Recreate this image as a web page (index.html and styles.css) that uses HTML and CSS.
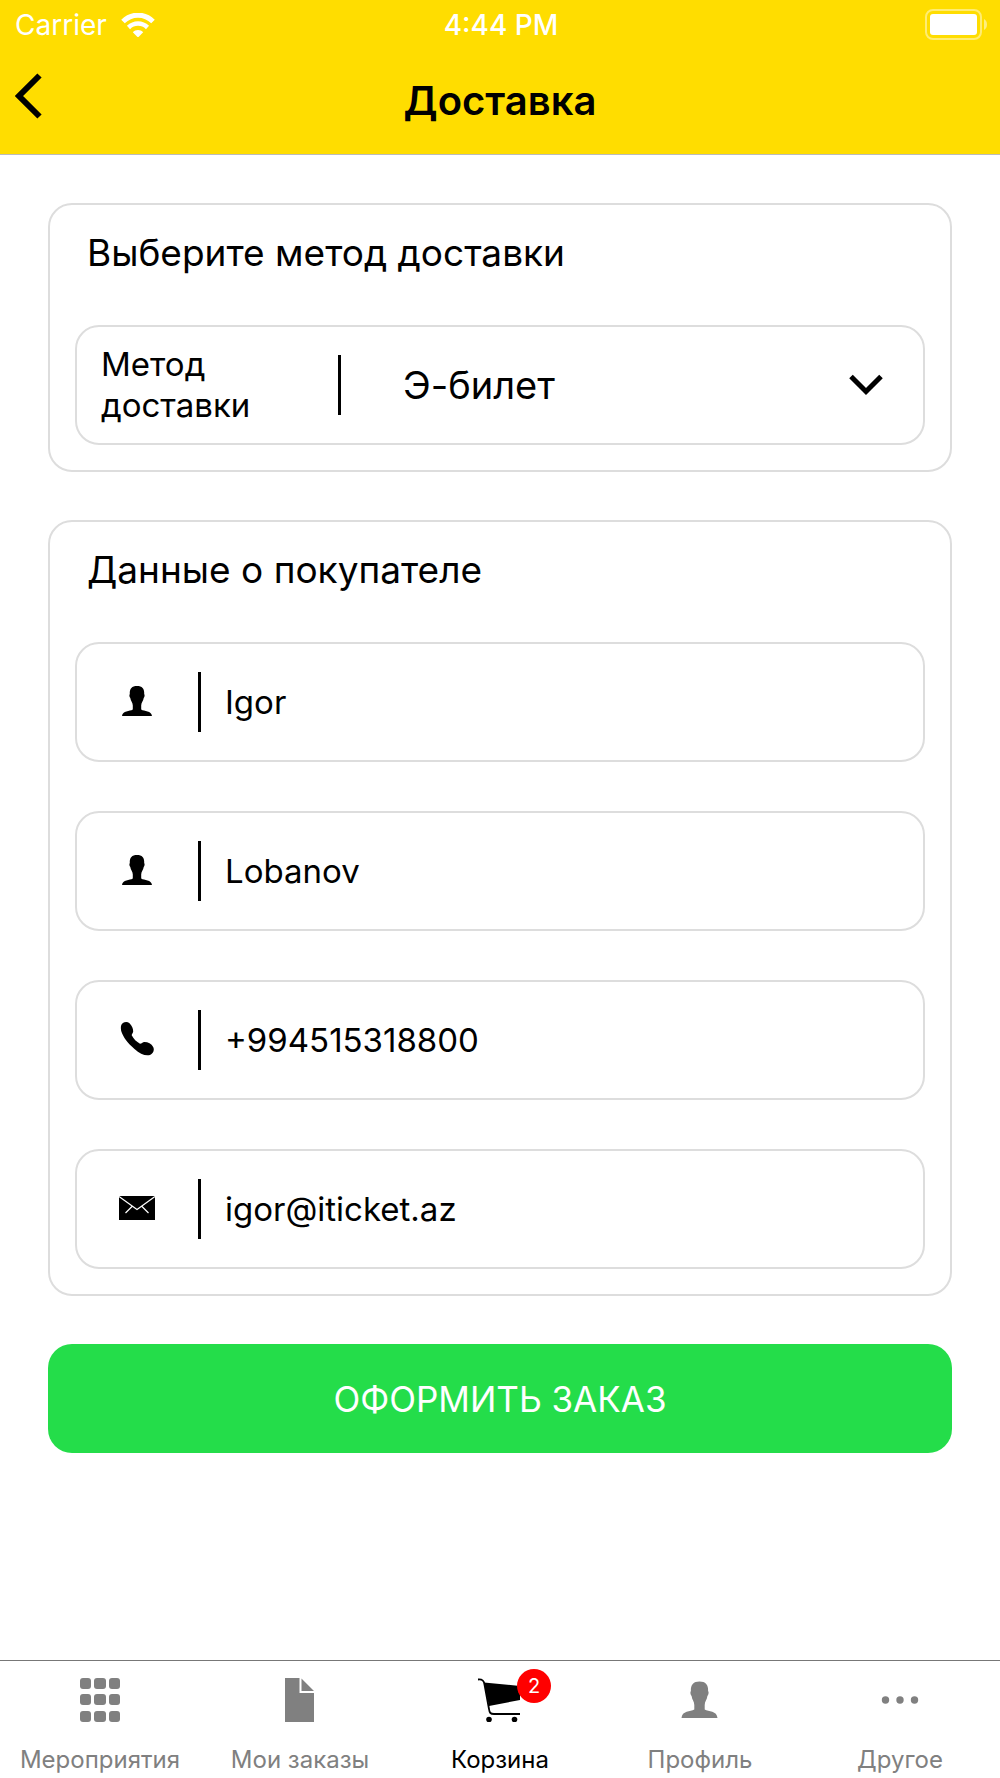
FILE: index.html
```html
<!DOCTYPE html>
<html lang="ru">

<head>
    <meta charset="UTF-8">
    <meta name="viewport" content="width=device-width, initial-scale=1.0">
    <title>Доставка</title>
    <link rel="stylesheet" href="styles.css">
</head>

<body>
    <header class="header">
        <div class="status-bar">
            <div class="carrier">
                <span>Carrier</span>
                <svg class="wifi" viewBox="0 0 34 24" fill="none" stroke="#fff">
                    <path d="M2 8.5C10.500 0 23.500 0 32 8.500" stroke-width="5" />
                    <path d="M7.500 14.500C13 9.300 21 9.300 26.500 14.500" stroke-width="4.500" />
                    <path d="M17 24.500L11.800 19.300C14.500 16.300 19.500 16.300 22.200 19.300Z" fill="#fff" stroke="none" />
                </svg>
            </div>
            <span class="time">4:44 PM</span>
            <svg class="battery" viewBox="0 0 62 32">
                <rect x="1" y="1" width="55" height="29" rx="7" fill="none" stroke="#fff" stroke-width="2" opacity="0.45" />
                <rect x="5" y="5" width="47" height="21" rx="3" fill="#fff" />
                <path d="M59 10c4 2 4 9 0 11z" fill="#fff" opacity="0.5" />
            </svg>
        </div>
        <div class="nav-bar">
            <button class="back-button" type="button" aria-label="Назад">
                <svg viewBox="0 0 28 46" fill="none" stroke="#000" stroke-width="6">
                    <path d="M24.500 2.500L4 23L24.500 43.500" />
                </svg>
            </button>
            <h1>Доставка</h1>
        </div>
    </header>

    <main class="container">
        <form class="order-form">
            <section class="card">
                <h2>Выберите метод доставки</h2>
                <div class="field method-field">
                    <label for="method">Метод доставки</label>
                    <span class="divider"></span>
                    <select id="method">
                        <option selected>Э-билет</option>
                    </select>
                    <svg class="chevron" viewBox="0 0 34 22" fill="none" stroke="#000" stroke-width="5">
                        <path d="M2 2.500L17 17.500L32 2.500" />
                    </svg>
                </div>
            </section>

            <section class="card">
                <h2>Данные о покупателе</h2>
                <div class="fields">
                    <label class="field">
                        <svg class="field-icon" viewBox="0 0 36 36">
                            <path d="M18 3c5 0 7.500 2.600 7.200 8 .7 1 .5 2.800-.5 4-.3 3-2.500 4.500-2.500 7.500v4c3 2 10.300 1 10.800 6.500H3C3.500 27.500 10.800 28.500 13.800 26.500v-4c0-3-2.200-4.500-2.500-7.500-1-1.200-1.200-3-.5-4C10.500 5.600 13 3 18 3z" />
                        </svg>
                        <span class="divider"></span>
                        <input type="text" value="Igor" aria-label="Имя">
                    </label>
                    <label class="field">
                        <svg class="field-icon" viewBox="0 0 36 36">
                            <path d="M18 3c5 0 7.500 2.600 7.200 8 .7 1 .5 2.800-.5 4-.3 3-2.500 4.500-2.500 7.500v4c3 2 10.300 1 10.800 6.500H3C3.500 27.500 10.800 28.500 13.800 26.500v-4c0-3-2.200-4.500-2.500-7.500-1-1.200-1.200-3-.5-4C10.500 5.600 13 3 18 3z" />
                        </svg>
                        <span class="divider"></span>
                        <input type="text" value="Lobanov" aria-label="Фамилия">
                    </label>
                    <label class="field">
                        <svg class="field-icon" viewBox="0 0 36 36">
                            <path d="M2 5C2.800 1.500 7.500-.2 10.500 2.300 13 4.800 14.200 7.500 14.200 10.500c-.2 1.700-1.400 2.300-1.500 3.800C14.500 18 17.500 20.800 21 22.800c1.800 0 2.300-1.500 4.500-1.700 3.500 0 7 2 8.700 4.800 1.600 3.500-.2 6.600-3.200 8-4.500 1.400-10-1.200-15.500-6C9 22.500 4 16 2.200 10 1.800 8 1.800 6.500 2 5z" />
                        </svg>
                        <span class="divider"></span>
                        <input type="tel" value="+994515318800" aria-label="Телефон">
                    </label>
                    <label class="field">
                        <svg class="field-icon" viewBox="0 0 36 36">
                            <path d="M0 6h36v24H0z" />
                            <path d="M0 6.500L18 19.500L36 6.500M13 16.500L6.500 23M23 16.500L29.500 23" fill="none" stroke="#fff" stroke-width="1.200" />
                        </svg>
                        <span class="divider"></span>
                        <input type="email" value="igor@iticket.az" aria-label="Почта">
                    </label>
                </div>
            </section>

            <button class="submit-button" type="button">ОФОРМИТЬ ЗАКАЗ</button>
        </form>
    </main>

    <nav class="tab-bar">
        <a class="tab" href="#events">
            <svg class="tab-icon" viewBox="0 0 44 44">
                <rect x="2" y="0" width="11" height="11" rx="3" />
                <rect x="16" y="0" width="12" height="11" rx="3" />
                <rect x="31" y="0" width="11" height="11" rx="3" />
                <rect x="2" y="16" width="11" height="11" rx="3" />
                <rect x="16" y="16" width="12" height="11" rx="3" />
                <rect x="31" y="16" width="11" height="11" rx="3" />
                <rect x="2" y="33" width="11" height="11" rx="3" />
                <rect x="16" y="33" width="12" height="11" rx="3" />
                <rect x="31" y="33" width="11" height="11" rx="3" />
            </svg>
            <span>Мероприятия</span>
        </a>
        <a class="tab" href="#orders">
            <svg class="tab-icon" viewBox="0 0 44 44">
                <path d="M7 0h14.500v15H36v29H7zM23.500 0.500L36 13H23.500z" />
            </svg>
            <span>Мои заказы</span>
        </a>
        <a class="tab active" href="#cart">
            <span class="tab-icon cart-icon">
                <svg class="tab-icon" viewBox="0 0 44 44">
                    <path d="M6 4.500L42 8v14L11 28z" />
                    <path d="M0 1.500c5-.5 6 1.500 6.500 5L11 31c.5 4 1.500 5 5 5h26" fill="none" stroke="#000" stroke-width="1.800" />
                    <circle cx="11" cy="41.500" r="2.800" />
                    <circle cx="36.500" cy="41.500" r="2.800" />
                </svg>
                <span class="badge">2</span>
            </span>
            <span>Корзина</span>
        </a>
        <a class="tab" href="#profile">
            <svg class="tab-icon" viewBox="0 0 44 44">
                <path d="M21.500 3.500c6 0 9 3.200 8.600 9.600.9 1.200.6 3.500-.7 4.800-.3 3.600-2.700 5.400-2.700 9v4.500c3.800 2.300 12.300 1 12.800 8.600h-36c.5-7.600 9-6.300 12.800-8.600v-4.500c0-3.600-2.400-5.400-2.700-9-1.300-1.300-1.600-3.600-.7-4.800C12.500 6.700 15.500 3.500 21.500 3.500z" />
            </svg>
            <span>Профиль</span>
        </a>
        <a class="tab" href="#more">
            <svg class="tab-icon" viewBox="0 0 44 44">
                <circle cx="7.500" cy="22" r="3.700" />
                <circle cx="22" cy="22" r="3.700" />
                <circle cx="36.500" cy="22" r="3.700" />
            </svg>
            <span>Другое</span>
        </a>
    </nav>
</body>

</html>
```

FILE: styles.css
```css
* {
    box-sizing: border-box;
    font-family: Inter, 'Liberation Sans', sans-serif;
}

body {
    margin: 0;
    min-height: 100vh;
    display: flex;
    flex-direction: column;
    background-color: #fff;
    color: #000;
}

svg {
    display: block;
}

.header {
    background-color: #ffdd00;
    border-bottom: 1px solid #bbb;
}

.status-bar {
    display: grid;
    grid-template-columns: 1fr auto 1fr;
    align-items: center;
    height: 50px;
    padding: 0 13px 0 15px;
    color: #fff;
    font-size: 28px;
}

.carrier {
    display: flex;
    align-items: center;
    gap: 14px;
}

.wifi {
    width: 34px;
    height: 24px;
}

.time {
    font-weight: 500;
}

.battery {
    width: 62px;
    height: 32px;
    justify-self: end;
}

.nav-bar {
    display: grid;
    grid-template-columns: 60px 1fr 60px;
    align-items: center;
    height: 104px;
    padding-bottom: 4px;
}

.back-button {
    background: none;
    border: none;
    padding: 0 0 8px 15px;
    cursor: pointer;
}

.back-button svg {
    width: 28px;
    height: 46px;
}

h1 {
    margin: 0;
    font-size: 40px;
    font-weight: 600;
    text-align: center;
}

.container {
    flex: 1;
    padding: 48px;
}

.order-form {
    display: flex;
    flex-direction: column;
    gap: 48px;
}

.card {
    padding: 0 25px 25px;
    border: 2px solid #ddd;
    border-radius: 24px;
}

h2 {
    margin: 0 12px 24px;
    font-size: 37px;
    font-weight: 400;
    line-height: 96px;
}

.fields {
    display: flex;
    flex-direction: column;
    gap: 49px;
}

.field {
    display: flex;
    align-items: center;
    height: 120px;
    border: 2px solid #ddd;
    border-radius: 24px;
    font-size: 33px;
}

.divider {
    flex: none;
    width: 3px;
    height: 60px;
    background-color: #000;
}

.field-icon {
    flex: none;
    width: 36px;
    height: 36px;
    margin: 0 43px 2px 42px;
}

.field input,
.field select {
    flex: 1;
    min-width: 0;
    height: 100%;
    border: none;
    outline: none;
    background: none;
    color: #000;
    font-size: 33px;
}

.field input {
    padding: 0 24px;
}

.method-field {
    position: relative;
}

.method-field label {
    width: 261px;
    padding: 0 80px 0 24px;
    line-height: 41px;
}

.method-field select {
    appearance: none;
    padding: 0 100px 0 62px;
    font-size: 38px;
}

.chevron {
    position: absolute;
    right: 40px;
    width: 34px;
    height: 22px;
    pointer-events: none;
}

.submit-button {
    height: 109px;
    border: none;
    border-radius: 24px;
    background-color: #24dd4a;
    color: #fff;
    font-size: 35px;
    cursor: pointer;
}

.tab-bar {
    display: grid;
    grid-template-columns: repeat(5, 1fr);
    border-top: 1px solid #777;
    padding: 17px 0 2px;
}

.tab {
    display: flex;
    flex-direction: column;
    align-items: center;
    gap: 22px;
    color: #808080;
    font-size: 24px;
    line-height: 32px;
    text-decoration: none;
}

.tab.active {
    color: #000;
}

.tab-icon {
    width: 44px;
    height: 44px;
    fill: currentColor;
}

.cart-icon {
    position: relative;
}

.badge {
    position: absolute;
    top: -9px;
    right: -29px;
    width: 34px;
    height: 34px;
    border-radius: 50%;
    background-color: #ff0000;
    color: #fff;
    font-size: 20px;
    line-height: 34px;
    text-align: center;
}
```
